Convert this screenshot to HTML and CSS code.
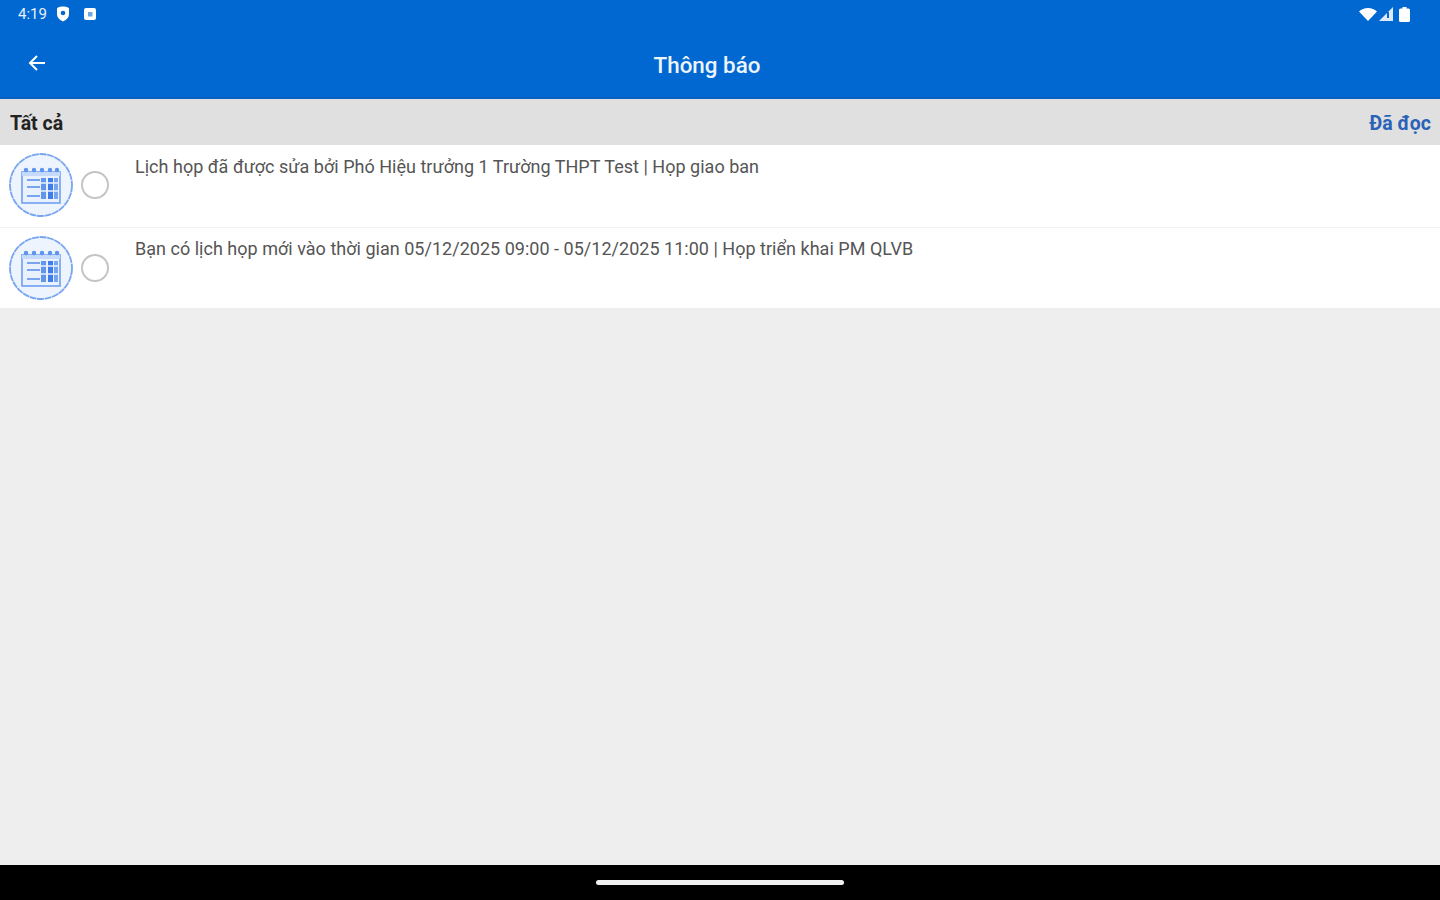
FILE: index.html
```html
<!DOCTYPE html>
<html lang="vi">
<head>
  <meta charset="UTF-8">
  <title>Thông báo</title>
  <meta name="viewport" content="width=device-width, initial-scale=1.0">
  <link rel="stylesheet" href="styles.css">
</head>
<body>

  <svg class="svg-defs" width="0" height="0">
    <symbol id="calendar-icon" viewBox="0 0 64 64">
      <circle cx="32" cy="32" r="31" fill="#eef4fe" stroke="#79a5ef" stroke-width="1.8" stroke-dasharray="7 .6"/>
      <rect x="13" y="19" width="38" height="31" fill="#e9f1fe" stroke="#6f9ff0" stroke-width="1.6"/>
      <rect x="13" y="19" width="38" height="4" fill="#c6daf9"/>
      <circle cx="17" cy="17" r="2.200" fill="#5f94ee"/>
      <circle cx="25" cy="17" r="2.200" fill="#5f94ee"/>
      <circle cx="33" cy="17" r="2.200" fill="#5f94ee"/>
      <circle cx="41" cy="17" r="2.200" fill="#5f94ee"/>
      <circle cx="48" cy="17" r="2.200" fill="#5f94ee"/>
      <path d="M18 27h13M18 34h13M18 43h13" stroke="#79a5ef" stroke-width="2.200"/>
      <rect x="32" y="25" width="5" height="21" fill="#6195ee"/>
      <rect x="39" y="25" width="5" height="21" fill="#3f7dea"/>
      <rect x="45" y="25" width="4" height="21" fill="#79a5ef"/>
      <path d="M29 30h21M29 38h21" stroke="#e9f1fe" stroke-width="1.400"/>
    </symbol>
  </svg>

  <div class="screen">
    <header class="app-header">
      <div class="status-bar">
        <div class="status-left">
          <span class="clock">4:19</span>
          <svg class="status-icon shield" viewBox="0 0 14 16"><path d="M7 0.5C10 0.5 13 1.500 13 2.500V8c0 3.400-2.600 5.900-6 7.500C3.600 13.900 1 11.400 1 8V2.500C1 1.500 4 0.500 7 0.500z" fill="#fff"/><circle cx="7" cy="7" r="2.300" fill="#0068d0"/></svg>
          <svg class="status-icon sim" viewBox="0 0 12 12"><rect width="12" height="12" rx="2" fill="#fff"/><rect x="4" y="4" width="4.500" height="4.500" fill="#6fa6e4"/></svg>
        </div>
        <div class="status-right">
          <svg class="status-icon wifi" viewBox="0 0 18 13"><path d="M0 3.400C2.400 1.300 5.500 0 9 0s6.600 1.300 9 3.400L9 13z" fill="#fff"/></svg>
          <svg class="status-icon signal" viewBox="0 0 14 14"><path d="M14 0V14H0z" fill="#dfeaf8"/><rect x="8" y="5" width="2" height="6" fill="#0068d0"/></svg>
          <svg class="status-icon battery" viewBox="0 0 11 15"><path d="M3.500 0h4v1.500h2a1.500 1.500 0 0 1 1.500 1.500v10.500a1.500 1.500 0 0 1-1.500 1.500h-8a1.500 1.500 0 0 1-1.500-1.500V3a1.500 1.500 0 0 1 1.500-1.500h2z" fill="#fff"/></svg>
        </div>
      </div>
      <div class="toolbar">
        <svg class="back-icon" viewBox="0 0 20 20"><path d="M18 10H3M10 3l-7 7 7 7" fill="none" stroke="#fff" stroke-width="2"/></svg>
        <h1>Thông báo</h1>
      </div>
    </header>

    <div class="filter-bar">
      <span class="filter-all">Tất cả</span>
      <span class="mark-read">Đã đọc</span>
    </div>

    <ul class="notification-list">
      <li class="notification">
        <svg class="notification-icon"><use href="#calendar-icon"/></svg>
        <span class="radio"></span>
        <p>Lịch họp đã được sửa bởi Phó Hiệu trưởng 1 Trường THPT Test | Họp giao ban</p>
      </li>
      <li class="notification">
        <svg class="notification-icon"><use href="#calendar-icon"/></svg>
        <span class="radio"></span>
        <p>Bạn có lịch họp mới vào thời gian 05/12/2025 09:00 - 05/12/2025 11:00 | Họp triển khai PM QLVB</p>
      </li>
    </ul>

    <main class="empty-area"></main>

    <footer class="nav-bar">
      <span class="gesture-pill"></span>
    </footer>
  </div>

</body>
</html>
```

FILE: styles.css
```css
* {
  box-sizing: border-box;
  margin: 0;
  padding: 0;
}

body {
  font-family: Roboto, sans-serif;
  background-color: #eeeeee;
  color: #444;
  overflow: hidden;
}

.svg-defs {
  display: block;
  height: 0;
}

.screen {
  width: 1440px;
  height: 900px;
  display: flex;
  flex-direction: column;
}

.app-header {
  height: 99px;
  background-color: #0068d0;
  color: #fff;
  border-bottom: 2px solid #0a5fc0;
}

.status-bar {
  height: 28px;
  padding: 0 30px 0 18px;
  display: flex;
  justify-content: space-between;
  align-items: center;
}

.status-left,
.status-right {
  display: flex;
  align-items: center;
}

.clock {
  font-size: 15px;
  margin-right: 9px;
  color: #e8f0fa;
}

.status-icon {
  display: block;
}

.shield {
  width: 14px;
  height: 16px;
  margin-right: 14px;
}

.sim {
  width: 12px;
  height: 12px;
}

.wifi {
  width: 18px;
  height: 13px;
  margin-right: 2px;
}

.signal {
  width: 14px;
  height: 14px;
  margin-right: 6px;
}

.battery {
  width: 11px;
  height: 15px;
}

.toolbar {
  height: 69px;
  padding-left: 27px;
  display: flex;
  align-items: center;
}

.back-icon {
  width: 20px;
  height: 20px;
}

.toolbar h1 {
  flex: 1;
  font-size: 22.4px;
  font-weight: 500;
  line-height: 28px;
  text-align: center;
  padding: 5px 73px 0 0;
  color: #eef4fc;
}

.filter-bar {
  height: 46px;
  padding: 2px 9px 0 10px;
  background-color: #e0e0e0;
  display: flex;
  justify-content: space-between;
  align-items: center;
  font-size: 19.5px;
  font-weight: 700;
}

.filter-all {
  color: #222;
}

.mark-read {
  color: #2a62b8;
}

.notification-list {
  list-style: none;
  background-color: #fff;
}

.notification {
  height: 83px;
  padding: 8px 0 0 9px;
  display: flex;
  align-items: flex-start;
  border-bottom: 1px solid #f2f2f2;
}

.notification:last-child {
  height: 80px;
  border-bottom: none;
}

.notification-icon {
  width: 64px;
  height: 64px;
  flex-shrink: 0;
}

.radio {
  width: 28px;
  height: 28px;
  margin: 18px 26px 0 8px;
  border: 2px solid #c4c4c4;
  border-radius: 50%;
  flex-shrink: 0;
}

.notification p {
  font-size: 18px;
  line-height: 28px;
  letter-spacing: 0.02px;
  color: #555;
}

.notification:last-child p {
  margin-top: -1px;
}

.empty-area {
  flex: 1;
  background-color: #eeeeee;
}

.nav-bar {
  height: 35px;
  background-color: #000;
  display: flex;
  justify-content: center;
  padding-top: 15px;
}

.gesture-pill {
  width: 248px;
  height: 5px;
  background-color: #f0f0f0;
  border-radius: 3px;
}
```
